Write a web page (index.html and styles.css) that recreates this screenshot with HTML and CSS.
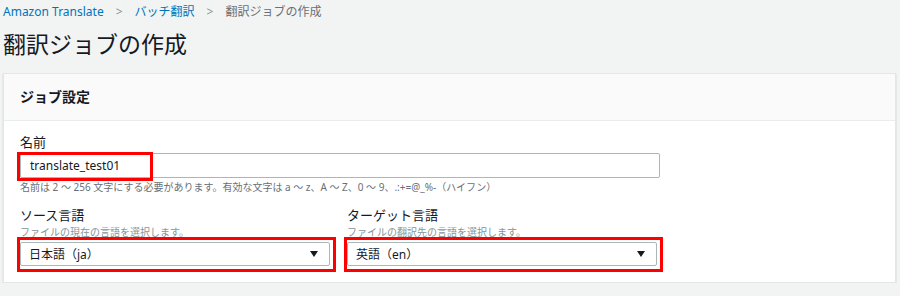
FILE: index.html
```html
<!DOCTYPE html>
<html lang="ja">
<head>
    <meta charset="UTF-8">
    <title>翻訳ジョブの作成</title>
    <link rel="stylesheet" href="styles.css">
</head>
<body>
    <nav class="breadcrumb">
        <a href="#">Amazon Translate</a>
        <span class="sep">&gt;</span>
        <a href="#">バッチ翻訳</a>
        <span class="sep">&gt;</span>
        <span class="current">翻訳ジョブの作成</span>
    </nav>
    <h1 class="title">翻訳ジョブの作成</h1>

    <section class="card">
        <div class="card-header">ジョブ設定</div>
        <div class="card-body">
            <div class="field">
                <label class="label">名前</label>
                <div class="input-wrap">
                    <div class="input">translate_test01</div>
                    <div class="mark name-mark"></div>
                </div>
                <p class="hint">名前は 2 ～ 256 文字にする必要があります。有効な文字は a ～ z、A ～ Z、0 ～ 9、.:+=@_%-（ハイフン）</p>
            </div>

            <div class="row">
                <div class="field">
                    <label class="label">ソース言語</label>
                    <p class="desc">ファイルの現在の言語を選択します。</p>
                    <div class="mark-box">
                        <div class="select">
                            <span>日本語（ja）</span>
                            <span class="arrow"></span>
                        </div>
                    </div>
                </div>
                <div class="field">
                    <label class="label">ターゲット言語</label>
                    <p class="desc">ファイルの翻訳先の言語を選択します。</p>
                    <div class="mark-box">
                        <div class="select">
                            <span>英語（en）</span>
                            <span class="arrow"></span>
                        </div>
                    </div>
                </div>
            </div>
        </div>
    </section>
</body>
</html>
```

FILE: styles.css
```css
body {
    margin: 0;
    padding: 0 4px 0 3px;
    background: #f2f3f3;
    color: #16191f;
    font-family: "Noto Sans", "Noto Sans CJK JP", sans-serif;
}

.breadcrumb {
    height: 24px;
    line-height: 24px;
    font-size: 12px;
    display: flex;
    gap: 12px;
}

.breadcrumb a {
    color: #0073bb;
    text-decoration: none;
}

.breadcrumb .sep {
    color: #879596;
}

.breadcrumb .current {
    color: #687078;
}

.title {
    margin: 4px 0 13px;
    font-size: 23px;
    line-height: 32px;
    font-weight: 400;
}

.card {
    background: #fff;
    border: 1px solid #e4e7e7;
    box-shadow: 0 1px 1px rgba(0, 28, 36, 0.25);
}

.card-header {
    height: 46px;
    line-height: 46px;
    padding: 0 16px;
    background: #fafafa;
    border-bottom: 1px solid #eaeded;
    font-size: 14px;
    font-weight: 700;
}

.card-body {
    padding: 12px 16px 10px;
    max-width: 640px;
}

.label {
    display: block;
    font-size: 13px;
    line-height: 18px;
}

.input-wrap {
    position: relative;
    margin-top: 2px;
}

.input {
    height: 23px;
    line-height: 23px;
    padding: 0 9px;
    border: 1px solid #aab7b8;
    border-radius: 2px;
    font-size: 12px;
}

.mark {
    position: absolute;
    border: 3px solid #f00;
}

.name-mark {
    left: -3px;
    top: -1px;
    width: 130px;
    height: 23px;
}

.hint {
    margin: 2px 0 0;
    font-size: 10px;
    line-height: 14px;
    color: #687078;
}

.row {
    display: grid;
    grid-template-columns: 1fr 1fr;
    gap: 14px;
    margin-top: 12px;
}

.desc {
    margin: 0;
    font-size: 10px;
    line-height: 16px;
    color: #879596;
}

.mark-box {
    margin: -3px -3px 0 -3px;
    padding: 2px 3px 3px 0;
    border: 3px solid #f00;
}

.select {
    display: flex;
    justify-content: space-between;
    align-items: center;
    height: 22px;
    padding: 0 11px 0 8px;
    border: 1px solid #aab7b8;
    border-radius: 2px;
    font-size: 12px;
}

.arrow {
    width: 0;
    height: 0;
    border-left: 4px solid transparent;
    border-right: 4px solid transparent;
    border-top: 6px solid #16191f;
}
```
